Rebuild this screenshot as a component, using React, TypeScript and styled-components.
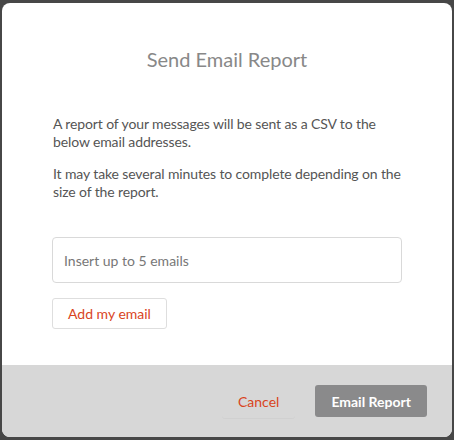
import React from "react";
import styled, { createGlobalStyle } from "styled-components";

const Global = createGlobalStyle`
  html, body { margin: 0; padding: 0; background: #474747; }
  body { font-family: Lato, "Noto Sans", sans-serif; }
  * { box-sizing: border-box; }
`;

const Page = styled.div`
  padding: 3px 2px 0 2px;
  height: 440px;
`;

const Modal = styled.div`
  width: 450px;
  height: 434px;
  background: #fff;
  border-radius: 8px;
  overflow: hidden;
  display: flex;
  flex-direction: column;
`;

const Body = styled.div`
  flex: 1;
  padding: 44px 50px 0 50px;
  display: flex;
  flex-direction: column;
  align-items: flex-start;
`;

const Title = styled.h2`
  margin: 0 0 44px 0;
  align-self: stretch;
  font-size: 20px;
  font-weight: 400;
  line-height: 24px;
  color: #888;
  text-align: center;
`;

const Para = styled.p`
  margin: 0 0 14px 1px;
  white-space: nowrap;
  font-size: 14px;
  letter-spacing: -0.12px;
  line-height: 18px;
  color: #555;
`;

const Input = styled.input`
  margin-top: 22px;
  height: 46px;
  width: 350px;
  border: 1px solid #d9d9d9;
  border-radius: 4px;
  padding: 0 11px;
  font-family: inherit;
  font-size: 14px;
  color: #555;
  outline: none;
  &::placeholder { color: #777; }
`;

const SecondaryButton = styled.button`
  margin-top: 15px;
  height: 31px;
  padding: 0 15px;
  background: #fff;
  border: 1px solid #dedede;
  border-radius: 3px;
  font-family: inherit;
  font-size: 14px;
  color: #d9441c;
`;

const Footer = styled.div`
  height: 72px;
  background: #d7d7d7;
  display: flex;
  align-items: center;
  justify-content: flex-end;
  padding: 0 25px 0 0;
  gap: 20px;
`;

const TextButton = styled.button`
  height: 33px;
  padding: 0 16px;
  background: transparent;
  border: none;
  border-radius: 3px;
  box-shadow: 0 1px 0 rgba(0,0,0,0.03);
  font-family: inherit;
  font-size: 14px;
  color: #d9441c;
`;

const PrimaryButton = styled.button`
  height: 32px;
  padding: 0 16px;
  background: #8a8a8b;
  border: none;
  border-radius: 3px;
  font-family: inherit;
  font-size: 14px;
  font-weight: 700;
  color: #fff;
`;

export default function App() {
  return (
    <>
      <Global />
      <Page>
        <Modal>
          <Body>
            <Title>Send Email Report</Title>
            <Para>
              A report of your messages will be sent as a CSV to the
              <br />
              below email addresses.
            </Para>
            <Para>
              It may take several minutes to complete depending on the
              <br />
              size of the report.
            </Para>
            <Input placeholder="Insert up to 5 emails" />
            <SecondaryButton>Add my email</SecondaryButton>
          </Body>
          <Footer>
            <TextButton>Cancel</TextButton>
            <PrimaryButton>Email Report</PrimaryButton>
          </Footer>
        </Modal>
      </Page>
    </>
  );
}
